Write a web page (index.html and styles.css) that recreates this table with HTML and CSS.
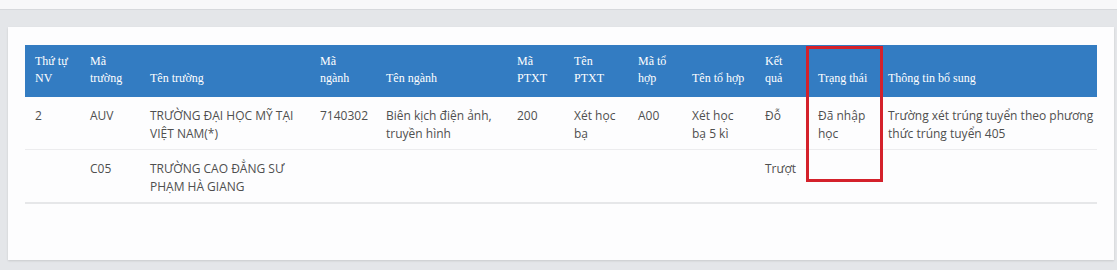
FILE: index.html
```html
<!DOCTYPE html>
<html lang="vi">
<head>
<meta charset="utf-8">
<title>Kết quả xét tuyển</title>
<link rel="stylesheet" href="styles.css">
</head>
<body>
<div class="topbar"></div>
<main class="page">
  <section class="card">
    <table class="results">
      <colgroup>
        <col class="c1"><col class="c2"><col class="c3"><col class="c4"><col class="c5"><col class="c6">
        <col class="c7"><col class="c8"><col class="c9"><col class="c10"><col class="c11"><col class="c12">
      </colgroup>
      <thead>
        <tr>
          <th>Thứ tự<br>NV</th>
          <th>Mã<br>trường</th>
          <th>Tên trường</th>
          <th>Mã<br>ngành</th>
          <th>Tên ngành</th>
          <th>Mã<br>PTXT</th>
          <th>Tên<br>PTXT</th>
          <th>Mã tổ<br>hợp</th>
          <th>Tên tổ hợp</th>
          <th>Kết<br>quả</th>
          <th>Trạng thái</th>
          <th>Thông tin bổ sung</th>
        </tr>
      </thead>
      <tbody>
        <tr>
          <td>2</td>
          <td>AUV</td>
          <td>TRƯỜNG ĐẠI HỌC MỸ TẠI VIỆT NAM(*)</td>
          <td>7140302</td>
          <td>Biên kịch điện ảnh, truyền hình</td>
          <td>200</td>
          <td>Xét học bạ</td>
          <td>A00</td>
          <td>Xét học<br>bạ 5 kì</td>
          <td>Đỗ</td>
          <td>Đã nhập học</td>
          <td class="info">Trường xét trúng tuyển theo phương thức trúng tuyển 405</td>
        </tr>
        <tr>
          <td></td>
          <td>C05</td>
          <td>TRƯỜNG CAO ĐẲNG SƯ PHẠM HÀ GIANG</td>
          <td></td>
          <td></td>
          <td></td>
          <td></td>
          <td></td>
          <td></td>
          <td>Trượt</td>
          <td></td>
          <td class="info"></td>
        </tr>
      </tbody>
    </table>
    <div class="highlight"></div>
  </section>
</main>
</body>
</html>
```

FILE: styles.css
```css
html, body {
  margin: 0;
  padding: 0;
}

body {
  background: #e4e6e9;
  width: 1117px;
  height: 270px;
  overflow: hidden;
  font-family: "Open Sans", "Noto Sans", sans-serif;
}

.topbar {
  height: 9px;
  background: #f8f8f9;
  border-bottom: 1px solid #d7d9dc;
}

.page {
  padding: 17px 3px 0 8px;
}

.card {
  position: relative;
  background: #fdfdfe;
  padding: 18px 17px 56px 17px;
  box-shadow: 0 1px 2px rgba(0, 0, 0, 0.12);
}

.results {
  width: 1072px;
  table-layout: fixed;
  border-collapse: collapse;
  border-bottom: 2px solid #e6e7e9;
}

.c1 { width: 55px; }
.c2 { width: 60px; }
.c3 { width: 170px; }
.c4 { width: 66px; }
.c5 { width: 131px; }
.c6 { width: 57px; }
.c7 { width: 64px; }
.c8 { width: 54px; }
.c9 { width: 73px; }
.c10 { width: 53px; }
.c11 { width: 70px; }
.c12 { width: 219px; }

.results th {
  background: #337cc2;
  color: #ffffff;
  font-family: "Liberation Serif", "Times New Roman", serif;
  font-weight: normal;
  font-size: 12px;
  line-height: 17px;
  text-align: left;
  vertical-align: bottom;
  height: 34px;
  padding: 8px 4px 10px 10px;
}

.results td {
  color: #4f4f4f;
  font-size: 12px;
  line-height: 18px;
  vertical-align: top;
  height: 36px;
  padding: 10px 4px 6px 10px;
  border-top: 1px solid #ececee;
}

.results td.info {
  padding-right: 0;
}

.results tbody tr:first-child td {
  border-top: none;
}

.highlight {
  position: absolute;
  left: 798px;
  top: 19px;
  width: 77px;
  height: 136px;
  box-sizing: border-box;
  border: 3px solid #d4212b;
}
```
